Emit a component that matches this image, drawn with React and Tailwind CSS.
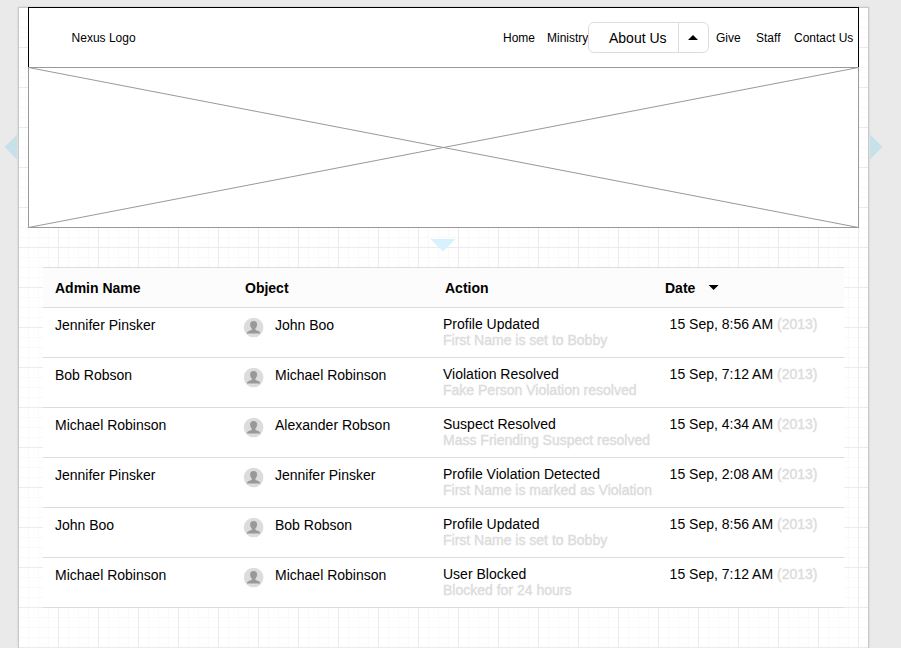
const rows = [
  ["Jennifer Pinsker", "John Boo", "Profile Updated", "First Name is set to Bobby", "15 Sep, 8:56 AM"],
  ["Bob Robson", "Michael Robinson", "Violation Resolved", "Fake Person Violation resolved", "15 Sep, 7:12 AM"],
  ["Michael Robinson", "Alexander Robson", "Suspect Resolved", "Mass Friending Suspect resolved", "15 Sep, 4:34 AM"],
  ["Jennifer Pinsker", "Jennifer Pinsker", "Profile Violation Detected", "First Name is marked as Violation", "15 Sep, 2:08 AM"],
  ["John Boo", "Bob Robson", "Profile Updated", "First Name is set to Bobby", "15 Sep, 8:56 AM"],
  ["Michael Robinson", "Michael Robinson", "User Blocked", "Blocked for 24 hours", "15 Sep, 7:12 AM"],
];

function Avatar() {
  return (
    <svg className="mt-[9px] h-[21px] w-[21px] shrink-0" viewBox="0 0 21 21">
      <circle cx="10.6" cy="10.5" r="9.8" fill="#dcdcdc" />
      <path
        d="M10.6 4C8.4 4 7.1 5.3 7.1 7.5C7.1 9.2 7.8 10.6 8.8 11.5V12.6C8.4 14 4.4 13.5 3.8 16.4H17.4C16.8 13.5 12.8 14 12.4 12.6V11.5C13.4 10.6 14.1 9.2 14.1 7.5C14.1 5.3 12.8 4 10.6 4Z"
        fill="#999"
      />
    </svg>
  );
}

function Header() {
  return (
    <header className="flex h-[60px] items-center border border-b-0 border-black bg-white text-xs leading-[14px]">
      <div className="w-[474px] pl-[42.6px]">Nexus Logo</div>
      <nav className="flex items-center whitespace-nowrap">
        <span className="w-11">Home</span>
        <span className="w-[41px]">Ministry</span>
        <div className="flex h-[31px] w-[121px] overflow-hidden rounded-md border border-[#dcdcdc] bg-white text-sm">
          <span className="flex w-[90px] items-center border-r border-[#dcdcdc] pl-5">About Us</span>
          <span className="flex flex-1 items-center justify-center">
            <svg className="h-[5px] w-[11px]" viewBox="0 0 11 5"><path d="M5 0L10 5H0Z" /></svg>
          </span>
        </div>
        <span className="ml-[7px] w-10">Give</span>
        <span className="w-[38px]">Staff</span>
        <span>Contact Us</span>
      </nav>
    </header>
  );
}

function AuditTable() {
  return (
    <section className="ml-6 mt-[39px] w-[801px] border-t border-[#dcdcdc] bg-white text-sm leading-4">
      <div className="flex h-10 items-center border-b border-[#dcdcdc] bg-[#fcfcfc] pl-3 font-bold">
        <span className="w-[190px]">Admin Name</span>
        <span className="w-[200px]">Object</span>
        <span className="w-[220px]">Action</span>
        <span className="w-[43px]">Date</span>
        <svg className="h-[5px] w-[11px]" viewBox="0 0 11 5"><path d="M.6 0H10.6L5.6 5Z" /></svg>
      </div>
      {rows.map(([admin, object, action, detail, date], i) => (
        <div key={i} className="flex h-[50px] whitespace-nowrap border-b border-[#dcdcdc] pl-3">
          <span className="w-[188px] pt-[9px]">{admin}</span>
          <div className="flex w-[200px]">
            <Avatar />
            <span className="pl-[11px] pt-[9px]">{object}</span>
          </div>
          <div className="w-[226.6px] pt-2">
            <div>{action}</div>
            <div className="text-[#dcdcdc] [-webkit-text-stroke:0.4px_#dcdcdc]">{detail}</div>
          </div>
          <div className="pt-2">
            {date} <span className="text-[#dcdcdc] [-webkit-text-stroke:0.4px_#dcdcdc]">(2013)</span>
          </div>
        </div>
      ))}
    </section>
  );
}

export default function App() {
  return (
    <div className="h-[648px] w-[901px] overflow-hidden bg-[#eaeaea] pl-[18px] pt-[7px] font-['Liberation_Sans',Arial,sans-serif] text-black">
      <main className="relative h-[641px] w-[851px] border-x border-t border-[#c8c8c8] bg-white bg-[linear-gradient(90deg,#ebebeb_1px,transparent_1px),linear-gradient(#ebebeb_1px,transparent_1px),linear-gradient(90deg,#f9f9f9_1px,transparent_1px),linear-gradient(#f9f9f9_1px,transparent_1px)] bg-[size:40px_40px,40px_40px,10px_10px,10px_10px] bg-[position:-1px_-1px,-1px_-1px,-1px_-1px,-1px_-1px] shadow-[0_0_2px_rgba(0,0,0,0.12)]">
        <div className="-mt-px ml-[9px] w-[831px]">
          <Header />
          <svg className="block h-[161px] w-[831px]" viewBox="0 0 831 161">
            <rect x="0.5" y="0.5" width="830" height="160" fill="#fff" stroke="#999" />
            <path d="M.5 .5L830.5 160.5M830.5 .5L.5 160.5" stroke="#999" fill="none" />
          </svg>
        </div>
        <AuditTable />
        <svg className="absolute left-[411px] top-[231px] h-[13px] w-[26px]" viewBox="0 0 26 13"><path d="M.4 0H25.6L13 12.5Z" fill="#d6f2fc" /></svg>
        <svg className="absolute -left-[15px] top-[126px] h-[26px] w-[13px]" viewBox="0 0 13 26"><path d="M13 .5V25.5L.6 13Z" fill="#c6e1ea" /></svg>
        <svg className="absolute left-[851px] top-[126px] h-[26px] w-[13px]" viewBox="0 0 13 26"><path d="M0 .5V25.5L12.5 13Z" fill="#c6e1ea" /></svg>
      </main>
    </div>
  );
}
